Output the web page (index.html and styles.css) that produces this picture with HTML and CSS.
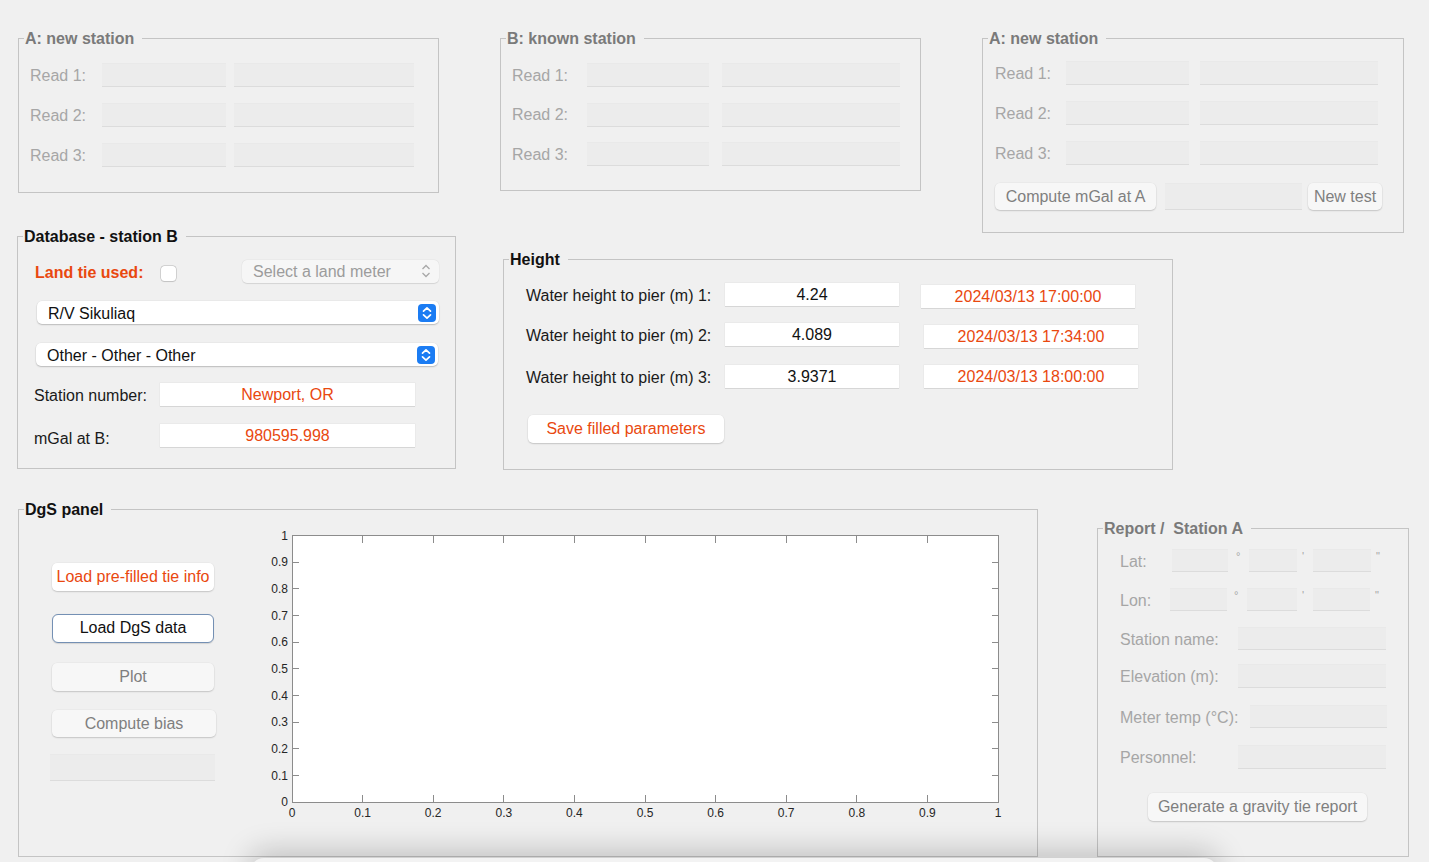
FILE: index.html
```html
<!DOCTYPE html>
<html>
<head>
<meta charset="utf-8">
<title>Gravity tie</title>
<link rel="stylesheet" href="styles.css">
</head>
<body>
<div class="app">
  <div class="row row1">
    <section class="panel p-a1 disabled">
      <div class="ptitle">A: new station</div>
      <div class="reads">
        <div class="rd"><span class="lbl">Read 1:</span><span class="fld f1"></span><span class="fld f2"></span></div>
        <div class="rd"><span class="lbl">Read 2:</span><span class="fld f1"></span><span class="fld f2"></span></div>
        <div class="rd"><span class="lbl">Read 3:</span><span class="fld f1"></span><span class="fld f2"></span></div>
      </div>
    </section>
    <section class="panel p-b disabled">
      <div class="ptitle">B: known station</div>
      <div class="reads">
        <div class="rd"><span class="lbl">Read 1:</span><span class="fld f1"></span><span class="fld f2"></span></div>
        <div class="rd"><span class="lbl">Read 2:</span><span class="fld f1"></span><span class="fld f2"></span></div>
        <div class="rd"><span class="lbl">Read 3:</span><span class="fld f1"></span><span class="fld f2"></span></div>
      </div>
    </section>
    <section class="panel p-a2 disabled">
      <div class="ptitle">A: new station</div>
      <div class="reads">
        <div class="rd"><span class="lbl">Read 1:</span><span class="fld f1"></span><span class="fld f2"></span></div>
        <div class="rd"><span class="lbl">Read 2:</span><span class="fld f1"></span><span class="fld f2"></span></div>
        <div class="rd"><span class="lbl">Read 3:</span><span class="fld f1"></span><span class="fld f2"></span></div>
      </div>
      <div class="a2-btns">
        <span class="btn dis b-compute">Compute mGal at A</span>
        <span class="fld a2-fld"></span>
        <span class="btn dis b-new">New test</span>
      </div>
    </section>
  </div>

  <div class="row row2">
    <section class="panel p-db">
      <div class="ptitle">Database - station B</div>
      <div class="db-body">
        <div class="db-r1">
          <span class="land-lbl">Land tie used:</span>
          <span class="chk"></span>
          <span class="popup-dis">Select a land meter
            <svg class="chev-g" width="10" height="16" viewBox="0 0 10 16"><path d="M1.5 6 L5 2.5 L8.5 6 M1.5 10 L5 13.5 L8.5 10" fill="none" stroke="#a8a8a8" stroke-width="1.3"/></svg>
          </span>
        </div>
        <div class="dd dd1">R/V Sikuliaq
          <span class="step"><svg width="18" height="18" viewBox="0 0 18 18"><path d="M5.5 7.2 L9 3.8 L12.5 7.2 M5.5 10.8 L9 14.2 L12.5 10.8" fill="none" stroke="#fff" stroke-width="1.7" stroke-linecap="round" stroke-linejoin="round"/></svg></span>
        </div>
        <div class="dd dd2">Other - Other - Other
          <span class="step"><svg width="18" height="18" viewBox="0 0 18 18"><path d="M5.5 7.2 L9 3.8 L12.5 7.2 M5.5 10.8 L9 14.2 L12.5 10.8" fill="none" stroke="#fff" stroke-width="1.7" stroke-linecap="round" stroke-linejoin="round"/></svg></span>
        </div>
        <div class="db-row db-r4"><span class="db-lbl">Station number:</span><span class="wfld orange">Newport, OR</span></div>
        <div class="db-row db-r5"><span class="db-lbl">mGal at B:</span><span class="wfld orange">980595.998</span></div>
      </div>
    </section>

    <section class="panel p-h">
      <div class="ptitle">Height</div>
      <div class="h-body">
        <div class="hr hr1"><span class="h-lbl">Water height to pier (m) 1:</span><span class="wfld h-val">4.24</span><span class="wfld h-date orange">2024/03/13 17:00:00</span></div>
        <div class="hr hr2"><span class="h-lbl">Water height to pier (m) 2:</span><span class="wfld h-val">4.089</span><span class="wfld h-date orange">2024/03/13 17:34:00</span></div>
        <div class="hr hr3"><span class="h-lbl">Water height to pier (m) 3:</span><span class="wfld h-val">3.9371</span><span class="wfld h-date orange">2024/03/13 18:00:00</span></div>
        <span class="btn orange b-save">Save filled parameters</span>
      </div>
    </section>
  </div>

  <div class="row row3">
    <section class="panel p-dgs">
      <div class="ptitle">DgS panel</div>
      <div class="dgs-body">
        <div class="dgs-btns">
          <span class="btn orange b-load">Load pre-filled tie info</span>
          <span class="btn def b-dgs">Load DgS data</span>
          <span class="btn dis b-plot">Plot</span>
          <span class="btn dis b-bias">Compute bias</span>
          <span class="fld dgs-fld"></span>
        </div>
        <svg class="plot" width="748" height="300" viewBox="0 0 748 300">
          <rect x="30.5" y="10.5" width="706" height="267" fill="#fff" stroke="#8c8c8c" stroke-width="1"/>
          <path fill="none" stroke="#8c8c8c" stroke-width="1" shape-rendering="crispEdges"
            d="M30 250.5h7M30 223.5h7M30 197.5h7M30 170.5h7M30 143.5h7M30 117.5h7M30 90.5h7M30 63.5h7M30 37.5h7
               M737 250.5h-7M737 223.5h-7M737 197.5h-7M737 170.5h-7M737 143.5h-7M737 117.5h-7M737 90.5h-7M737 63.5h-7M737 37.5h-7
               M100.5 277v-7M171.5 277v-7M241.5 277v-7M312.5 277v-7M383.5 277v-7M453.5 277v-7M524.5 277v-7M594.5 277v-7M665.5 277v-7
               M100.5 11v7M171.5 11v7M241.5 11v7M312.5 11v7M383.5 11v7M453.5 11v7M524.5 11v7M594.5 11v7M665.5 11v7"/>
          <g class="ylab" text-anchor="end">
            <text x="26" y="281">0</text>
            <text x="26" y="254.5">0.1</text>
            <text x="26" y="227.5">0.2</text>
            <text x="26" y="201">0.3</text>
            <text x="26" y="174.5">0.4</text>
            <text x="26" y="147.5">0.5</text>
            <text x="26" y="121">0.6</text>
            <text x="26" y="94.5">0.7</text>
            <text x="26" y="67.5">0.8</text>
            <text x="26" y="41">0.9</text>
            <text x="26" y="14.5">1</text>
          </g>
          <g class="xlab" text-anchor="middle">
            <text x="30" y="292">0</text>
            <text x="100.6" y="292">0.1</text>
            <text x="171.2" y="292">0.2</text>
            <text x="241.8" y="292">0.3</text>
            <text x="312.4" y="292">0.4</text>
            <text x="383" y="292">0.5</text>
            <text x="453.6" y="292">0.6</text>
            <text x="524.2" y="292">0.7</text>
            <text x="594.8" y="292">0.8</text>
            <text x="665.4" y="292">0.9</text>
            <text x="736" y="292">1</text>
          </g>
        </svg>
      </div>
    </section>

    <section class="panel p-rep disabled">
      <div class="ptitle">Report /&nbsp; Station A</div>
      <div class="rep-body">
        <div class="rr r-lat">
          <span class="lbl l-lat">Lat:</span>
          <span class="fld la1"></span><span class="sym s-deg">°</span>
          <span class="fld la2"></span><span class="sym s-min">'</span>
          <span class="fld la3"></span><span class="sym s-sec">"</span>
        </div>
        <div class="rr r-lon">
          <span class="lbl l-lon">Lon:</span>
          <span class="fld lo1"></span><span class="sym s-deg2">°</span>
          <span class="fld lo2"></span><span class="sym s-min">'</span>
          <span class="fld lo3"></span><span class="sym s-sec">"</span>
        </div>
        <div class="rr r-name"><span class="lbl l-wide">Station name:</span><span class="fld rf"></span></div>
        <div class="rr r-elev"><span class="lbl l-wide">Elevation (m):</span><span class="fld rf tall"></span></div>
        <div class="rr r-temp"><span class="lbl l-temp">Meter temp (°C):</span><span class="fld rf-t"></span></div>
        <div class="rr r-pers"><span class="lbl l-wide">Personnel:</span><span class="fld rf tall"></span></div>
        <span class="btn dis b-report">Generate a gravity tie report</span>
      </div>
    </section>
  </div>

  <div class="dock"></div>
</div>
</body>
</html>
```

FILE: styles.css
```css
* { box-sizing: border-box; }

body {
  margin: 0;
  background: #f0f0f0;
  font-family: "Liberation Sans", Arial, Helvetica, sans-serif;
  font-size: 16px;
  color: #1a1a1a;
}

.app {
  position: relative;
  width: 1429px;
  height: 862px;
  overflow: hidden;
}

.row { display: flex; align-items: flex-start; }
.row1 { height: 236px; padding-top: 38px; }
.row2 { height: 273px; }
.row3 { height: 353px; }

/* panels */
.panel {
  border: 1px solid #c4c4c4;
  display: flex;
  flex-direction: column;
  align-items: flex-start;
  flex: none;
}
.ptitle {
  margin-top: -10px;
  margin-left: 5px;
  height: 20px;
  line-height: 20px;
  padding: 0 8px 0 1px;
  background: #f0f0f0;
  font-weight: bold;
  color: #111;
  white-space: nowrap;
}
.disabled .ptitle { color: #7a7a7a; }

.lbl { color: #a6a6a6; white-space: nowrap; }

/* fields */
.fld {
  display: block;
  background: #ececec;
  border-top: 1px solid #e9e9e9;
  border-bottom: 1px solid #dcdcdc;
  flex: none;
}
.wfld {
  display: block;
  background: #fff;
  height: 23px;
  line-height: 23px;
  text-align: center;
  box-shadow: 0 1px 0 #d6d6d6, 0 0 0 0.5px #e4e4e4;
  white-space: nowrap;
  flex: none;
}
.orange { color: #e9480f; }

/* buttons */
.btn {
  display: block;
  background: #fff;
  border-radius: 5px;
  text-align: center;
  white-space: nowrap;
  box-shadow: 0 1px 1.5px rgba(0,0,0,0.16), 0 0 0 0.5px rgba(0,0,0,0.04);
  flex: none;
}
.btn.dis { background: #f7f7f7; color: #7f7f7f; }
.btn.def {
  border: 1.5px solid #7490b4;
  border-radius: 6px;
  color: #111;
  box-shadow: 0 0.5px 1px rgba(0,0,0,0.12);
}

/* read panels */
.reads { display: flex; flex-direction: column; gap: 16px; }
.rd { display: flex; align-items: center; height: 24px; }
.rd .fld { height: 24px; }
.rd .lbl { margin-top: 1px; }

.p-a1 { width: 421px; height: 155px; margin-left: 18px; }
.p-a1 .reads { margin: 14px 0 0 11px; }
.p-a1 .lbl { width: 72px; }
.p-a1 .f1 { width: 124px; }
.p-a1 .f2 { width: 180px; margin-left: 8px; }

.p-b { width: 421px; height: 153px; margin-left: 61px; }
.p-b .reads { margin: 14px 0 0 11px; gap: 15.5px; }
.p-b .lbl { width: 75px; }
.p-b .f1 { width: 122px; }
.p-b .f2 { width: 178px; margin-left: 13px; }

.p-a2 { width: 422px; height: 195px; margin-left: 61px; }
.p-a2 .reads { margin: 12px 0 0 12px; }
.p-a2 .lbl { width: 71px; }
.p-a2 .f1 { width: 123px; }
.p-a2 .f2 { width: 178px; margin-left: 11px; }

.a2-btns { display: flex; margin: 18px 0 0 12px; }
.a2-btns .btn, .a2-fld { height: 27px; line-height: 27px; }
.b-compute { width: 161px; }
.a2-fld { width: 137px; margin-left: 9px; }
.b-new { width: 74px; margin-left: 6px; }

/* database panel */
.p-db { width: 439px; height: 233px; margin-left: 17px; }
.db-body { margin-left: 17px; display: flex; flex-direction: column; }
.db-r1 { display: flex; align-items: center; height: 23px; margin-top: 13px; }
.land-lbl { width: 126px; color: #e9480f; font-weight: bold; white-space: nowrap; margin-top: 3px; }
.chk {
  display: block;
  width: 15px;
  height: 15px;
  margin-top: 3px;
  background: #fff;
  border-radius: 3.5px;
  box-shadow: 0 0 0 0.5px #b4b4b4, 0 1px 1px rgba(0,0,0,0.12);
}
.popup-dis {
  position: relative;
  display: block;
  width: 197px;
  height: 23px;
  line-height: 23px;
  margin-left: 66px;
  padding-left: 11px;
  background: #f6f6f6;
  border-radius: 5px;
  color: #9c9c9c;
  box-shadow: 0 0.5px 1px rgba(0,0,0,0.1), 0 0 0 0.5px rgba(0,0,0,0.03);
  white-space: nowrap;
}
.chev-g { position: absolute; right: 8px; top: 3px; }

.dd {
  position: relative;
  width: 402px;
  height: 23px;
  line-height: 25px;
  padding-left: 11px;
  background: #fff;
  border-radius: 5px;
  color: #111;
  box-shadow: 0 1px 1.5px rgba(0,0,0,0.2), 0 0 0 0.5px rgba(0,0,0,0.05);
}
.dd1 { margin-top: 18px; margin-left: 2px; }
.dd2 { margin-top: 19px; margin-left: 1px; }
.step {
  position: absolute;
  right: 3px;
  top: 2.5px;
  width: 18px;
  height: 18px;
  border-radius: 4px;
  background: #1b7cf3;
  display: flex;
}

.db-row { display: flex; align-items: center; height: 23px; margin-left: -1px; }
.db-r4 { margin-top: 17px; }
.db-r5 { margin-top: 18px; }
.db-lbl { width: 126px; color: #1a1a1a; white-space: nowrap; margin-top: 3px; }
.db-row .wfld { width: 255px; }
.db-r5 .db-lbl { margin-top: 6px; }

/* height panel */
.p-h { width: 670px; height: 211px; margin-left: 47px; margin-top: 23px; }
.h-body { margin-left: 22px; display: flex; flex-direction: column; align-items: flex-start; }
.hr { display: flex; align-items: flex-start; }
.hr1 { margin-top: 13px; }
.hr2 { margin-top: 15px; }
.hr3 { margin-top: 17px; }
.h-lbl { width: 199px; height: 23px; line-height: 25px; white-space: nowrap; }
.h-val { width: 174px; color: #111; }
.h-date { width: 214px; margin-left: 25px; margin-top: 2px; }
.hr1 .h-date { margin-left: 22px; }
.hr3 .h-date { margin-top: 0; }
.b-save { width: 196px; height: 28px; line-height: 28px; margin: 27px 0 0 2px; }

/* DgS panel */
.p-dgs { width: 1020px; height: 348px; margin-left: 18px; }
.dgs-body { display: flex; align-items: flex-start; }
.dgs-btns { display: flex; flex-direction: column; margin: 43px 0 0 33px; width: 165px; }
.dgs-btns .btn { width: 162px; }
.b-load { height: 28px; line-height: 28px; }
.b-dgs { height: 29px; line-height: 26px; margin-top: 23px; }
.b-plot { height: 28px; line-height: 28px; margin-top: 20px; }
.b-bias { height: 27px; line-height: 27px; margin-top: 19px; width: 164px !important; }
.dgs-fld { width: 165px; height: 27px; margin-top: 17px; margin-left: -2px; }
.plot { display: block; margin: 5px 0 0 45px; flex: none; }
.plot text { font-family: "Liberation Sans", Arial, sans-serif; font-size: 12px; fill: #262626; }

/* report panel */
.p-rep { width: 312px; height: 329px; margin-left: 59px; margin-top: 19px; }
.rep-body { margin-left: 22px; display: flex; flex-direction: column; align-items: flex-start; }
.rr { display: flex; align-items: flex-start; }
.rr .lbl { height: 23px; line-height: 25px; }
.rr .fld { height: 23px; }
.rr .fld.tall { height: 24px; }
.r-lat { margin-top: 10px; }
.r-lon { margin-top: 16px; }
.r-name { margin-top: 16px; }
.r-elev { margin-top: 14px; }
.r-temp { margin-top: 17px; }
.r-pers { margin-top: 17px; }
.l-lat { width: 52px; }
.l-lon { width: 50px; }
.la1 { width: 56px; }
.la2 { width: 48px; }
.la3 { width: 58px; }
.lo1 { width: 57px; }
.lo2 { width: 50px; }
.lo3 { width: 57px; }
.sym { font-size: 11px; line-height: 14px; color: #a6a6a6; }
.s-deg { width: 21px; padding-left: 8px; }
.s-deg2 { width: 20px; padding-left: 7px; }
.s-min { width: 16px; padding-left: 5px; }
.s-sec { width: 14px; padding-left: 5px; }
.l-wide { width: 118px; }
.l-temp { width: 130px; }
.rf { width: 148px; }
.rf-t { width: 137px; }
.b-report { width: 219px; height: 28px; line-height: 28px; margin: 24px 0 0 28px; }

/* floating dock at the bottom edge */
.dock {
  position: absolute;
  left: 250px;
  top: 858px;
  width: 968px;
  height: 30px;
  border-radius: 14px 14px 0 0;
  background: #f3f3f3;
  box-shadow: 0 -6px 30px rgba(0,0,0,0.22);
}
```
